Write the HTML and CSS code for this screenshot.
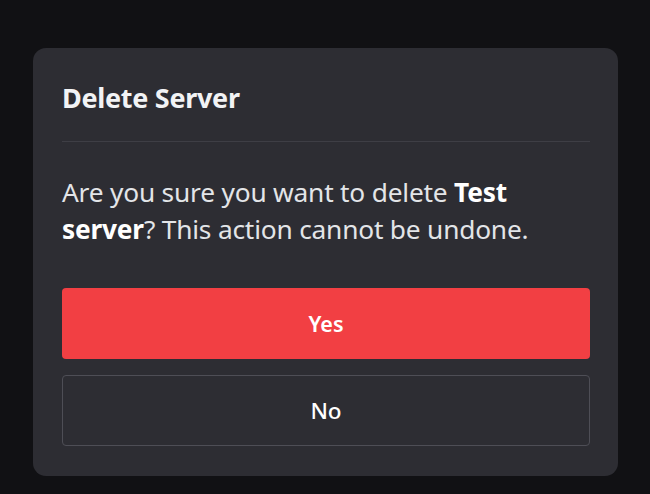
FILE: index.html
```html
<!DOCTYPE html>
<html lang="en">
<head>
    <meta charset="UTF-8">
    <meta name="viewport" content="width=device-width, initial-scale=1.0">
    <title>Delete Server</title>
    <link rel="stylesheet" href="styles.css">
</head>
<body>
    <div class="modal">
        <div class="modal-header">
            <h2>Delete Server</h2>
        </div>
        <p class="modal-text">Are you sure you want to delete <strong>Test server</strong>? This action cannot be undone.</p>
        <div class="modal-actions">
            <button class="btn btn-danger">Yes</button>
            <button class="btn btn-outline">No</button>
        </div>
    </div>
</body>
</html>
```

FILE: styles.css
```css
body {
    margin: 0;
    background: #111114;
    font-family: "Noto Sans", "Open Sans", sans-serif;
    color: #f2f3f5;
}
.modal {
    width: 585px;
    height: 428px;
    box-sizing: border-box;
    margin: 48px 0 0 33px;
    padding: 0 28px 30px 29px;
    background: #2d2d33;
    border-radius: 13px;
}
.modal-header {
    padding: 35px 0 28px;
    border-bottom: 1px solid #3e3e45;
}
.modal-header h2 {
    margin: 0;
    font-size: 27px;
    line-height: 30px;
    font-weight: 700;
    letter-spacing: -0.3px;
}
.modal-text {
    margin: 32px 0 0;
    font-size: 26.3px;
    line-height: 36.5px;
    letter-spacing: -0.2px;
    color: #e3e5e8;
}
.modal-text strong {
    color: #fff;
    font-weight: 700;
}
.modal-actions {
    display: flex;
    flex-direction: column;
    gap: 16px;
    margin-top: 41px;
}
.btn {
    height: 71px;
    border-radius: 4px;
    font-family: inherit;
    font-size: 21.5px;
    font-weight: 600;
    color: #fff;
    cursor: pointer;
}
.btn-danger {
    background: #f23f43;
    border: none;
}
.btn-outline {
    background: transparent;
    border: 1px solid #4e4e56;
    font-weight: 500;
    font-size: 22.5px;
}
```
